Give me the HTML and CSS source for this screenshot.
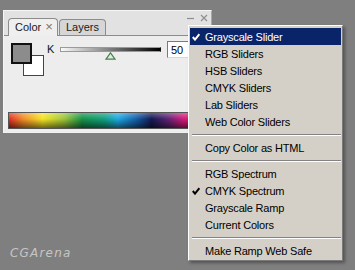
FILE: index.html
```html
<!DOCTYPE html>
<html lang="en">
<head>
    <meta charset="UTF-8">
    <title>Color palette menu</title>
    <link rel="stylesheet" href="styles.css">
</head>
<body>
    <div class="desk">
        <div class="palette">
            <div class="palette-head">
                <div class="tabs">
                    <div class="tab active">Color <span class="tab-x">×</span></div>
                    <div class="tab">Layers</div>
                </div>
                <div class="win-btns">
                    <svg width="8" height="8" viewBox="0 0 8 8"><path d="M0 4.5 H7" stroke="#8e8e8e" stroke-width="1.2"/></svg>
                    <svg width="8" height="8" viewBox="0 0 8 8"><path d="M1 1 L7 7 M7 1 L1 7" stroke="#8e8e8e" stroke-width="1.2"/></svg>
                </div>
            </div>
            <div class="palette-body">
                <div class="mixer">
                    <div class="swatches">
                        <div class="swatch fg"></div>
                        <div class="swatch bg"></div>
                    </div>
                    <div class="channel">
                        <span class="channel-name">K</span>
                        <div class="slider">
                            <div class="track"></div>
                            <svg class="thumb" width="11" height="8" viewBox="0 0 11 8"><polygon points="5.5,0.8 10,7.2 1,7.2" fill="#dfeedd" stroke="#4d7d52" stroke-width="1.2"/></svg>
                        </div>
                        <input class="value" type="text" value="50">
                    </div>
                </div>
                <div class="spectrum"></div>
            </div>
        </div>

        <div class="menu">
            <div class="item selected"><span class="check"><svg width="8" height="8" viewBox="0 0 8 8"><path d="M0.8 4 L3 6.6 L7.4 1.2" fill="none" stroke="#fff" stroke-width="2"/></svg></span>Grayscale Slider</div>
            <div class="item"><span class="check"></span>RGB Sliders</div>
            <div class="item"><span class="check"></span>HSB Sliders</div>
            <div class="item"><span class="check"></span>CMYK Sliders</div>
            <div class="item"><span class="check"></span>Lab Sliders</div>
            <div class="item"><span class="check"></span>Web Color Sliders</div>
            <div class="sep"></div>
            <div class="item"><span class="check"></span>Copy Color as HTML</div>
            <div class="sep"></div>
            <div class="item"><span class="check"></span>RGB Spectrum</div>
            <div class="item"><span class="check"><svg width="8" height="8" viewBox="0 0 8 8"><path d="M0.8 4 L3 6.6 L7.4 1.2" fill="none" stroke="#000" stroke-width="2"/></svg></span>CMYK Spectrum</div>
            <div class="item"><span class="check"></span>Grayscale Ramp</div>
            <div class="item"><span class="check"></span>Current Colors</div>
            <div class="sep"></div>
            <div class="item"><span class="check"></span>Make Ramp Web Safe</div>
        </div>

        <div class="watermark">CGArena</div>
    </div>
</body>
</html>
```

FILE: styles.css
```css
* {
    margin: 0;
    padding: 0;
    box-sizing: border-box;
}

body {
    background: #7f7f7f;
    font-family: 'Liberation Sans', Arial, sans-serif;
    font-size: 11px;
    color: #000;
}

.desk {
    position: relative;
    width: 355px;
    height: 270px;
    padding: 10px 0 0 3px;
    overflow: hidden;
}

/* palette window */
.palette {
    width: 209px;
    height: 123px;
    display: flex;
    flex-direction: column;
    background: #e2e2e2;
    border: 1px solid #f6f6f6;
    border-right-color: #a8a8a8;
    border-bottom-color: #f0f0f0;
}

.palette-head {
    display: flex;
    justify-content: space-between;
    height: 24px;
}

.tabs {
    display: flex;
    align-items: flex-end;
    padding-left: 4px;
}

.tab {
    height: 16px;
    line-height: 15px;
    padding: 0 6px;
    border: 1px solid #8c8c8c;
    border-bottom: none;
    border-radius: 4px 4px 0 0;
    background: #d6d6d6;
    color: #1a1a1a;
    margin-right: 1px;
}

.tab.active {
    height: 18px;
    padding: 0 4px 0 6px;
    background: #efefef;
    margin-bottom: -1px;
    position: relative;
}

.tab-x {
    color: #777;
    font-size: 13px;
    margin-left: 1px;
}

.win-btns {
    display: flex;
    gap: 5px;
    padding: 3px 3px 0 0;
}

.palette-body {
    flex: 1;
    display: flex;
    flex-direction: column;
    background: #ededed;
    border-top: 1px solid #8c8c8c;
    padding: 0 0 3px 4px;
}

.mixer {
    display: flex;
    gap: 3px;
    padding-left: 3px;
}

.swatches {
    display: grid;
    grid-template-columns: 12px 9px 12px;
    grid-template-rows: 12px 9px 12px;
    margin-top: 7px;
}

.swatch {
    border: 1px solid #222;
}

.swatch.fg {
    grid-area: 1 / 1 / 3 / 3;
    background: #8c8c8c;
    border: 2px solid #111;
    z-index: 1;
}

.swatch.bg {
    grid-area: 2 / 2 / 4 / 4;
    background: #fff;
    border-color: #444;
}

.channel {
    display: flex;
    align-items: flex-start;
    margin-top: 5px;
}

.channel-name {
    width: 7px;
    line-height: 16px;
    color: #111;
}

.slider {
    width: 101px;
    margin: 0 6px;
    padding-top: 6px;
}

.track {
    height: 5px;
    background: linear-gradient(to right, #fafafa, #000);
    border: 1px solid #9a9a9a;
    border-right-color: #111;
}

.thumb {
    display: block;
    margin-left: 45px;
}

.value {
    width: 30px;
    height: 17px;
    padding-left: 3px;
    font: 11px 'Liberation Sans', Arial, sans-serif;
    border: 1px solid #7a7a7a;
    border-bottom-color: #d8d8d8;
    border-right-color: #d8d8d8;
    background: #fff;
}

.spectrum {
    margin-top: auto;
    width: 200px;
    height: 17px;
    border: 1px solid #555;
    background:
        linear-gradient(to bottom, rgba(255, 255, 255, 0.3), rgba(255, 255, 255, 0) 40%, rgba(0, 0, 0, 0.55)),
        linear-gradient(to right, #e03024, #f08a2a 7%, #f6e425 17%, #9cc43a 28%, #16924a 37%, #12a07e 48%, #1fa9e2 55%, #1462aa 64%, #141a52 72%, #5a2474 80%, #d41a7c 88%, #e62048 95%, #e02030);
}

/* popup menu */
.menu {
    position: absolute;
    left: 188px;
    top: 25px;
    width: 155px;
    padding: 2px 1px 1px 1px;
    background: #d4d0c8;
    border: 1px solid #fff;
    border-right-color: #7a7a7a;
    border-bottom-color: #7a7a7a;
    box-shadow: 2px 2px 3px rgba(0, 0, 0, 0.35);
}

.item {
    display: flex;
    align-items: center;
    height: 17px;
    letter-spacing: -0.2px;
    white-space: nowrap;
}

.item.selected {
    background: #0a246a;
    color: #fff;
}

.check {
    display: flex;
    align-items: center;
    width: 15px;
    height: 17px;
    padding-left: 2px;
}

.sep {
    height: 9px;
    padding: 4px 0 0 2px;
}

.sep::before {
    content: '';
    display: block;
    border-top: 1px solid #848284;
    border-bottom: 1px solid #fff;
}

.watermark {
    margin: 113px 0 0 7px;
    font-family: 'DejaVu Sans', sans-serif;
    font-style: italic;
    font-size: 12px;
    letter-spacing: 1.2px;
    color: #c6c6c6;
}
```
